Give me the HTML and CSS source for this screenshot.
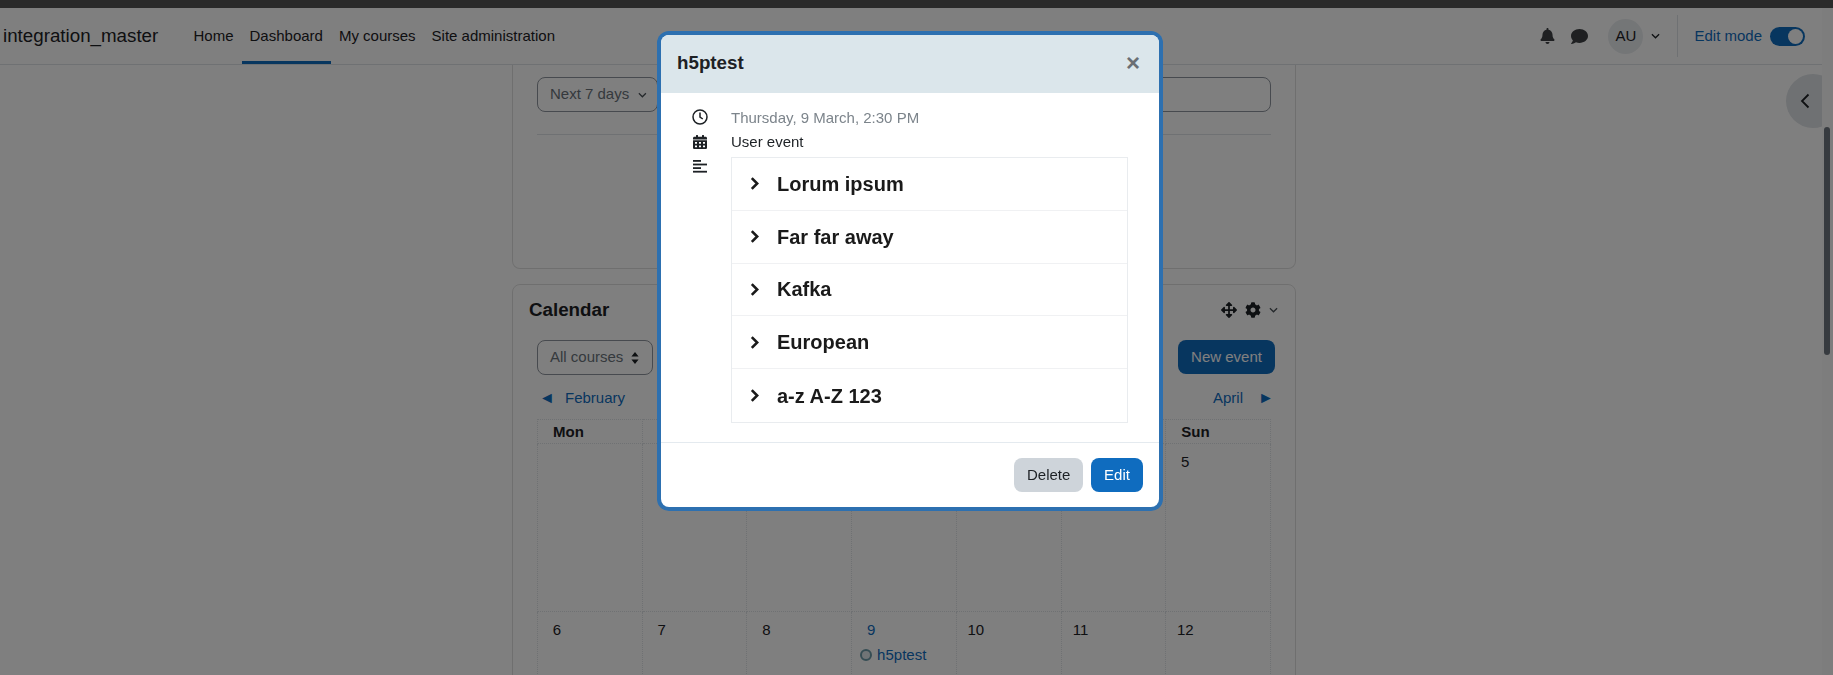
FILE: index.html
```html
<!DOCTYPE html>
<html lang="en">
<head>
<meta charset="utf-8">
<title>Dashboard</title>
<link rel="stylesheet" href="styles.css">
</head>
<body>
<div class="topstrip"></div>
<nav class="navbar">
  <a class="brand">integration_master</a>
  <ul class="nav-links">
    <li><a>Home</a></li>
    <li class="active"><a>Dashboard</a></li>
    <li><a>My courses</a></li>
    <li><a>Site administration</a></li>
  </ul>
  <div class="nav-right">
    <svg class="ico-bell" viewBox="0 0 448 512"><path d="M224 512c35.32 0 63.97-28.65 63.97-64H160.03c0 35.35 28.65 64 63.97 64zm215.39-149.71c-19.32-20.76-55.47-51.99-55.47-154.29 0-77.7-54.48-139.9-127.94-155.16V32c0-17.67-14.32-32-31.98-32s-31.98 14.33-31.98 32v20.84C118.56 68.1 64.08 130.3 64.08 208c0 102.3-36.15 133.53-55.47 154.29-6 6.45-8.66 14.16-8.61 21.71.11 16.4 12.98 32 32.1 32h383.8c19.12 0 32-15.6 32.1-32 .05-7.55-2.61-15.27-8.61-21.71z"/></svg>
    <svg class="ico-chat" viewBox="0 0 512 512"><path d="M256 32C114.6 32 0 125.1 0 240c0 49.6 21.4 95 57 130.7C44.5 421.1 2.7 466 2.2 466.5c-2.2 2.3-2.8 5.7-1.5 8.7S4.8 480 8 480c66.3 0 116-31.8 140.6-51.4 32.7 12.3 69 19.4 107.4 19.4 141.4 0 256-93.1 256-208S397.4 32 256 32z"/></svg>
    <span class="avatar">AU</span>
    <svg class="chev chev-user" viewBox="0 0 10 6"><path d="M1 1l4 4 4-4"/></svg>
    <span class="divider"></span>
    <span class="edit-label">Edit mode</span>
    <span class="toggle"><span class="knob"></span></span>
  </div>
</nav>

<main class="content">
  <section class="card card-timeline">
    <div class="filter-row">
      <div class="select select-days">Next 7 days <svg class="chev" viewBox="0 0 10 6"><path d="M1 1l4 4 4-4"/></svg></div>
      <div class="search"></div>
    </div>
    <hr class="rule">
  </section>

  <section class="card card-calendar">
    <div class="cal-head">
      <h2>Calendar</h2>
      <div class="cal-tools">
        <svg class="ico-tool" viewBox="0 0 512 512"><path d="M352.201 425.775l-79.196 79.196c-9.373 9.373-24.568 9.373-33.941 0l-79.196-79.196c-15.119-15.119-4.411-40.971 16.971-40.97h51.162L228 284H127.196v51.162c0 21.382-25.851 32.09-40.971 16.971L7.029 272.937c-9.373-9.373-9.373-24.569 0-33.941L86.225 159.8c15.119-15.119 40.971-4.411 40.971 16.971V228H228V127.196h-51.23c-21.382 0-32.09-25.851-16.971-40.971l79.196-79.196c9.373-9.373 24.568-9.373 33.941 0l79.196 79.196c15.119 15.119 4.411 40.971-16.971 40.971h-51.162V228h100.804v-51.162c0-21.382 25.851-32.09 40.97-16.971l79.196 79.196c9.373 9.373 9.373 24.569 0 33.941L425.773 352.2c-15.119 15.119-40.971 4.411-40.97-16.971V284H284v100.804h51.23c21.382 0 32.09 25.851 16.971 40.971z"/></svg>
        <svg class="ico-tool" viewBox="0 0 512 512"><path d="M487.4 315.7l-42.6-24.6c4.3-23.2 4.3-47 0-70.2l42.6-24.6c4.9-2.8 7.1-8.6 5.5-14-11.1-35.6-30-67.8-54.7-94.6-3.8-4.1-10-5.1-14.8-2.3L380.8 110c-17.9-15.4-38.5-27.3-60.8-35.1V25.8c0-5.6-3.9-10.5-9.4-11.7-36.7-8.2-74.3-7.8-109.2 0-5.5 1.2-9.4 6.1-9.4 11.7V75c-22.2 7.9-42.8 19.8-60.8 35.1L88.7 85.5c-4.9-2.8-11-1.9-14.8 2.3-24.7 26.7-43.6 58.9-54.7 94.6-1.7 5.4.6 11.2 5.5 14L67.3 221c-4.3 23.2-4.3 47 0 70.2l-42.6 24.6c-4.9 2.8-7.1 8.6-5.5 14 11.1 35.6 30 67.8 54.7 94.6 3.8 4.1 10 5.1 14.8 2.3l42.6-24.6c17.9 15.4 38.5 27.3 60.8 35.1v49.2c0 5.6 3.9 10.5 9.4 11.7 36.7 8.2 74.3 7.8 109.2 0 5.5-1.2 9.4-6.1 9.4-11.7v-49.2c22.2-7.9 42.8-19.8 60.8-35.1l42.6 24.6c4.9 2.8 11 1.9 14.8-2.3 24.7-26.7 43.6-58.9 54.7-94.6 1.5-5.5-.7-11.3-5.6-14.1zM256 336c-44.1 0-80-35.9-80-80s35.9-80 80-80 80 35.9 80 80-35.9 80-80 80z"/></svg>
        <svg class="chev" viewBox="0 0 10 6"><path d="M1 1l4 4 4-4"/></svg>
      </div>
    </div>
    <div class="cal-actions">
      <div class="select select-courses">All courses <svg class="updown" viewBox="0 0 8 12"><path d="M4 0l3.6 4.6H.4zM4 12L.4 7.4h7.2z"/></svg></div>
      <button class="btn-new">New event</button>
    </div>
    <div class="cal-nav">
      <a class="cal-prev"><span class="arrow">◄</span>February</a>
      <a class="cal-next">April<span class="arrow">►</span></a>
    </div>
    <table class="month">
      <thead>
        <tr><th>Mon</th><th>Tue</th><th>Wed</th><th>Thu</th><th>Fri</th><th>Sat</th><th>Sun</th></tr>
      </thead>
      <tbody>
        <tr class="week">
          <td></td><td></td><td><span class="day">1</span></td><td><span class="day">2</span></td><td><span class="day">3</span></td><td><span class="day">4</span></td><td><span class="day">5</span></td>
        </tr>
        <tr class="week">
          <td><span class="day">6</span></td><td><span class="day">7</span></td><td><span class="day">8</span></td>
          <td><span class="day day-link">9</span><div class="event"><span class="dot"></span><a>h5ptest</a></div></td>
          <td><span class="day">10</span></td><td><span class="day">11</span></td><td><span class="day">12</span></td>
        </tr>
      </tbody>
    </table>
  </section>
</main>

<div class="drawer-tab">
  <svg class="drawer-chev" viewBox="0 0 10 16"><path d="M8.5 1.5L2 8l6.5 6.5"/></svg>
</div>
<div class="scrolltrack"><div class="scrollthumb"></div></div>

<div class="backdrop"></div>

<div class="modal" role="dialog">
  <header class="modal-head">
    <h5>h5ptest</h5>
    <span class="close">×</span>
  </header>
  <div class="modal-body">
    <div class="meta-row">
      <svg class="meta-ico" viewBox="0 0 16 16"><circle cx="8" cy="8" r="7"/><path d="M8 3.6V8l2.8 2"/></svg>
      <div class="date">Thursday, 9 March, 2:30 PM</div>
    </div>
    <div class="meta-row">
      <svg class="meta-ico solid cal-ico" viewBox="0 0 448 512" preserveAspectRatio="none"><path d="M0 464c0 26.5 21.5 48 48 48h352c26.5 0 48-21.5 48-48V192H0v272zm320-196c0-6.6 5.4-12 12-12h40c6.6 0 12 5.4 12 12v40c0 6.6-5.4 12-12 12h-40c-6.6 0-12-5.4-12-12v-40zm0 128c0-6.6 5.4-12 12-12h40c6.6 0 12 5.4 12 12v40c0 6.6-5.4 12-12 12h-40c-6.6 0-12-5.4-12-12v-40zM192 268c0-6.6 5.4-12 12-12h40c6.6 0 12 5.4 12 12v40c0 6.6-5.4 12-12 12h-40c-6.6 0-12-5.4-12-12v-40zm0 128c0-6.6 5.4-12 12-12h40c6.6 0 12 5.4 12 12v40c0 6.6-5.4 12-12 12h-40c-6.6 0-12-5.4-12-12v-40zM64 268c0-6.6 5.4-12 12-12h40c6.6 0 12 5.4 12 12v40c0 6.6-5.4 12-12 12H76c-6.6 0-12-5.4-12-12v-40zm0 128c0-6.6 5.4-12 12-12h40c6.6 0 12 5.4 12 12v40c0 6.6-5.4 12-12 12H76c-6.6 0-12-5.4-12-12v-40zM400 64h-48V16c0-8.8-7.2-16-16-16h-32c-8.8 0-16 7.2-16 16v48H160V16c0-8.8-7.2-16-16-16h-32c-8.8 0-16 7.2-16 16v48H48C21.5 64 0 85.5 0 112v48h448v-48c0-26.5-21.5-48-48-48z"/></svg>
      <div>User event</div>
    </div>
    <div class="meta-row desc-row">
      <svg class="meta-ico solid lines" viewBox="0 0 14 13"><rect y="0" width="8" height="1.8"/><rect y="3.6" width="14" height="1.8"/><rect y="7.2" width="8" height="1.8"/><rect y="10.8" width="14" height="1.8"/></svg>
      <div class="accordion">
        <div class="acc-row"><svg class="acc-chev" viewBox="0 0 8 12"><path d="M1.5 1l5 5-5 5"/></svg>Lorum ipsum</div>
        <div class="acc-row"><svg class="acc-chev" viewBox="0 0 8 12"><path d="M1.5 1l5 5-5 5"/></svg>Far far away</div>
        <div class="acc-row"><svg class="acc-chev" viewBox="0 0 8 12"><path d="M1.5 1l5 5-5 5"/></svg>Kafka</div>
        <div class="acc-row"><svg class="acc-chev" viewBox="0 0 8 12"><path d="M1.5 1l5 5-5 5"/></svg>European</div>
        <div class="acc-row"><svg class="acc-chev" viewBox="0 0 8 12"><path d="M1.5 1l5 5-5 5"/></svg>a-z A-Z 123</div>
      </div>
    </div>
  </div>
  <footer class="modal-foot">
    <button class="btn btn-grey">Delete</button>
    <button class="btn btn-blue">Edit</button>
  </footer>
</div>
</body>
</html>
```
FILE: styles.css
```css
* { box-sizing: border-box; }
html, body { height: 100%; }
body {
  margin: 0;
  overflow: hidden;
  background: #fff;
  color: #1d2125;
  font-family: "Liberation Sans", Arial, sans-serif;
  font-size: 15px;
  line-height: 1.5;
}
a { text-decoration: none; }

.topstrip { height: 8px; background: #545454; }

.navbar {
  display: flex;
  align-items: center;
  height: 57px;
  padding-left: 3px;
  background: #fff;
  border-bottom: 1px solid #dee2e6;
  position: relative;
}
.brand { width: 182.5px; margin-top: 1px; font-size: 18.75px; color: #1d2125; }
.nav-links {
  display: flex;
  height: 100%;
  margin: 0;
  padding: 0;
  list-style: none;
}
.nav-links li {
  display: flex;
  align-items: center;
  padding: 3px 8px 0;
  border-bottom: 3px solid transparent;
}
.nav-links li.active { border-bottom-color: #0f6cbf; }
.nav-links a { color: #1d2125; }

.nav-right {
  display: flex;
  align-items: center;
  margin-left: auto;
  padding-right: 28px;
  height: 100%;
}
.ico-bell { width: 15px; height: 16px; fill: #1d2125; opacity: .85; }
.ico-chat { width: 17px; height: 17px; margin-left: 16px; fill: #1d2125; opacity: .85; }
.avatar {
  display: flex;
  align-items: center;
  justify-content: center;
  width: 35px;
  height: 35px;
  margin-left: 20px;
  border-radius: 50%;
  background: #e9ecef;
}
.chev { width: 9px; height: 6px; fill: none; stroke: #495057; stroke-width: 1.4; }
.chev-user { margin-left: 8px; stroke: #1d2125; }
.divider { width: 1px; height: 42px; margin: 0 16px 0 17px; background: #dee2e6; }
.edit-label { color: #0f6cbf; }
.toggle {
  display: flex;
  justify-content: flex-end;
  align-items: center;
  width: 35px;
  height: 19px;
  margin-left: 8px;
  padding: 2px;
  border-radius: 10px;
  background: #0f6cbf;
}
.knob { width: 15px; height: 15px; border-radius: 50%; background: #fff; }

.content {
  width: 784px;
  height: calc(100vh - 65px);
  margin-left: 512px;
  overflow: hidden;
}
.card {
  border: 1px solid rgba(0, 0, 0, .125);
  border-radius: 8px;
  padding: 0 24px;
}
.card-timeline {
  height: 204px;
  border-top: 0;
  border-top-left-radius: 0;
  border-top-right-radius: 0;
  padding-top: 12px;
}
.filter-row { display: flex; }
.select {
  display: flex;
  align-items: center;
  height: 35px;
  padding: 0 10px 0 12px;
  border: 1px solid #8f959e;
  border-radius: 8px;
  color: #6a737b;
  white-space: nowrap;
}
.select-days { width: 121px; gap: 9px; }
.select-days .chev { margin-top: 1px; }
.search {
  flex: 1;
  height: 35px;
  margin-left: 8px;
  border: 1px solid #8f959e;
  border-radius: 8px;
}
.rule { height: 1px; margin: 22px 0 0; border: 0; background: #dee2e6; }

.card-calendar { margin-top: 15px; height: 420px; padding-left: 24px; }
.cal-head {
  display: flex;
  align-items: center;
  justify-content: space-between;
  height: 50px;
  margin-left: -8px;
}
.cal-head h2 { margin: 0; font-size: 18.75px; font-weight: 700; }
.cal-tools { display: flex; align-items: center; gap: 8px; margin-right: -7px; }
.ico-tool { width: 16px; height: 16px; fill: #1d2125; }
.cal-actions {
  display: flex;
  justify-content: space-between;
  margin-top: 5px;
  margin-right: -4px;
}
.select-courses { width: 116px; gap: 8px; }
.updown { width: 8px; height: 12px; fill: #1d2125; }
.btn-new {
  width: 97px;
  height: 34px;
  border: 0;
  border-radius: 8px;
  background: #0f6cbf;
  color: #fff;
  font: inherit;
}
.cal-nav {
  display: flex;
  justify-content: space-between;
  height: 44px;
  padding: 12px 3px 0;
  color: #0f6cbf;
}
.cal-nav .arrow { display: inline-block; width: 10px; font-size: 16px; line-height: 1; }
.cal-prev .arrow { margin: 0 16px 0 -1px; }
.cal-next .arrow { margin-left: 15px; }
.month {
  width: 734px;
  border-collapse: collapse;
  table-layout: fixed;
}
.month th, .month td { border: 1px dotted #dee2e6; }
.month th {
  height: 24px;
  padding: 0 0 0 15px;
  text-align: left;
  font-weight: 700;
  line-height: 1;
}
.month td {
  height: 168px;
  padding: 7px 0 0 4px;
  vertical-align: top;
}
.day { display: inline-block; width: 30px; text-align: center; }
.day-link { color: #0f6cbf; }
.event {
  display: flex;
  align-items: center;
  gap: 5px;
  margin: 2px 0 0 4px;
}
.event a { color: #0f6cbf; }
.dot {
  width: 12px;
  height: 12px;
  border: 2px solid #6c9aa8;
  border-radius: 50%;
  background: #e0e8ec;
}

.drawer-tab {
  position: fixed;
  top: 74px;
  left: 1786px;
  width: 36px;
  height: 54px;
  overflow: hidden;
}
.drawer-tab::before {
  content: "";
  position: absolute;
  left: 0;
  top: 0;
  width: 54px;
  height: 54px;
  border-radius: 50%;
  background: #dee2e6;
}
.drawer-chev {
  position: absolute;
  left: 14px;
  top: 19px;
  width: 10px;
  height: 16px;
  fill: none;
  stroke: #1d2125;
  stroke-width: 1.8;
}
.scrolltrack {
  position: fixed;
  top: 8px;
  right: 0;
  bottom: 0;
  width: 11px;
  background: #fbfbfb;
}
.scrollthumb {
  position: absolute;
  top: 119px;
  left: 2px;
  width: 6px;
  height: 228px;
  border-radius: 3px;
  background: #6f7680;
}

.backdrop {
  position: fixed;
  inset: 0;
  background: rgba(0, 0, 0, .5);
}

.modal {
  position: fixed;
  top: 35px;
  left: 661px;
  display: flex;
  flex-direction: column;
  width: 498px;
  height: 472px;
  border-radius: 8px;
  background: #fff;
  box-shadow: 0 0 0 4px #2d70b0;
}
.modal-head {
  display: flex;
  align-items: center;
  justify-content: space-between;
  height: 58px;
  padding: 0 19px 2px 16px;
  border-radius: 8px 8px 0 0;
  background: #dbe6eb;
}
.modal-head h5 { margin: 0; font-size: 18.75px; font-weight: 700; color: #1d2125; }
.close { font-size: 24px; font-weight: 700; line-height: 1; color: #6a6f74; }

.modal-body { flex: 1; padding: 12px 31px 0 31px; }
.meta-row { display: flex; align-items: center; height: 24.5px; }
.meta-row .meta-ico { margin-right: 23px; }
.meta-row .date { margin-top: 2px; }
.meta-ico {
  flex: none;
  width: 16px;
  height: 16px;
  fill: none;
  stroke: #1d2125;
  stroke-width: 1.5;
}
.meta-ico.solid { fill: #1d2125; stroke: none; }
.meta-row .cal-ico { width: 14px; height: 14px; margin-left: 1px; margin-right: 24px; }
.date { color: #7c848b; }
.desc-row { height: auto; align-items: flex-start; }
.meta-row .lines { width: 14px; height: 13px; margin: 6px 24px 0 1px; }
.accordion { width: 397px; margin-top: 3px; border: 1px solid #e9ecef; }
.acc-row {
  display: flex;
  align-items: center;
  height: 52.8px;
  padding-left: 18px;
  font-size: 20px;
  font-weight: 700;
  color: #1a1a1a;
  border-bottom: 1px solid #f0f1f3;
}
.acc-row:last-child { border-bottom: 0; }
.acc-chev {
  width: 9px;
  height: 13px;
  margin-right: 18px;
  fill: none;
  stroke: #1a1a1a;
  stroke-width: 2.4;
}
.modal-foot {
  display: flex;
  justify-content: flex-end;
  gap: 8px;
  height: 65px;
  padding: 15px 16px 0 0;
  border-top: 1px solid #e4eaef;
}
.btn {
  height: 34px;
  padding: 0 13px;
  border: 0;
  border-radius: 8px;
  font: inherit;
}
.btn-grey { width: 69px; background: #ced4da; color: #1d2125; }
.btn-blue { width: 52px; background: #0f6cbf; color: #fff; }
```
